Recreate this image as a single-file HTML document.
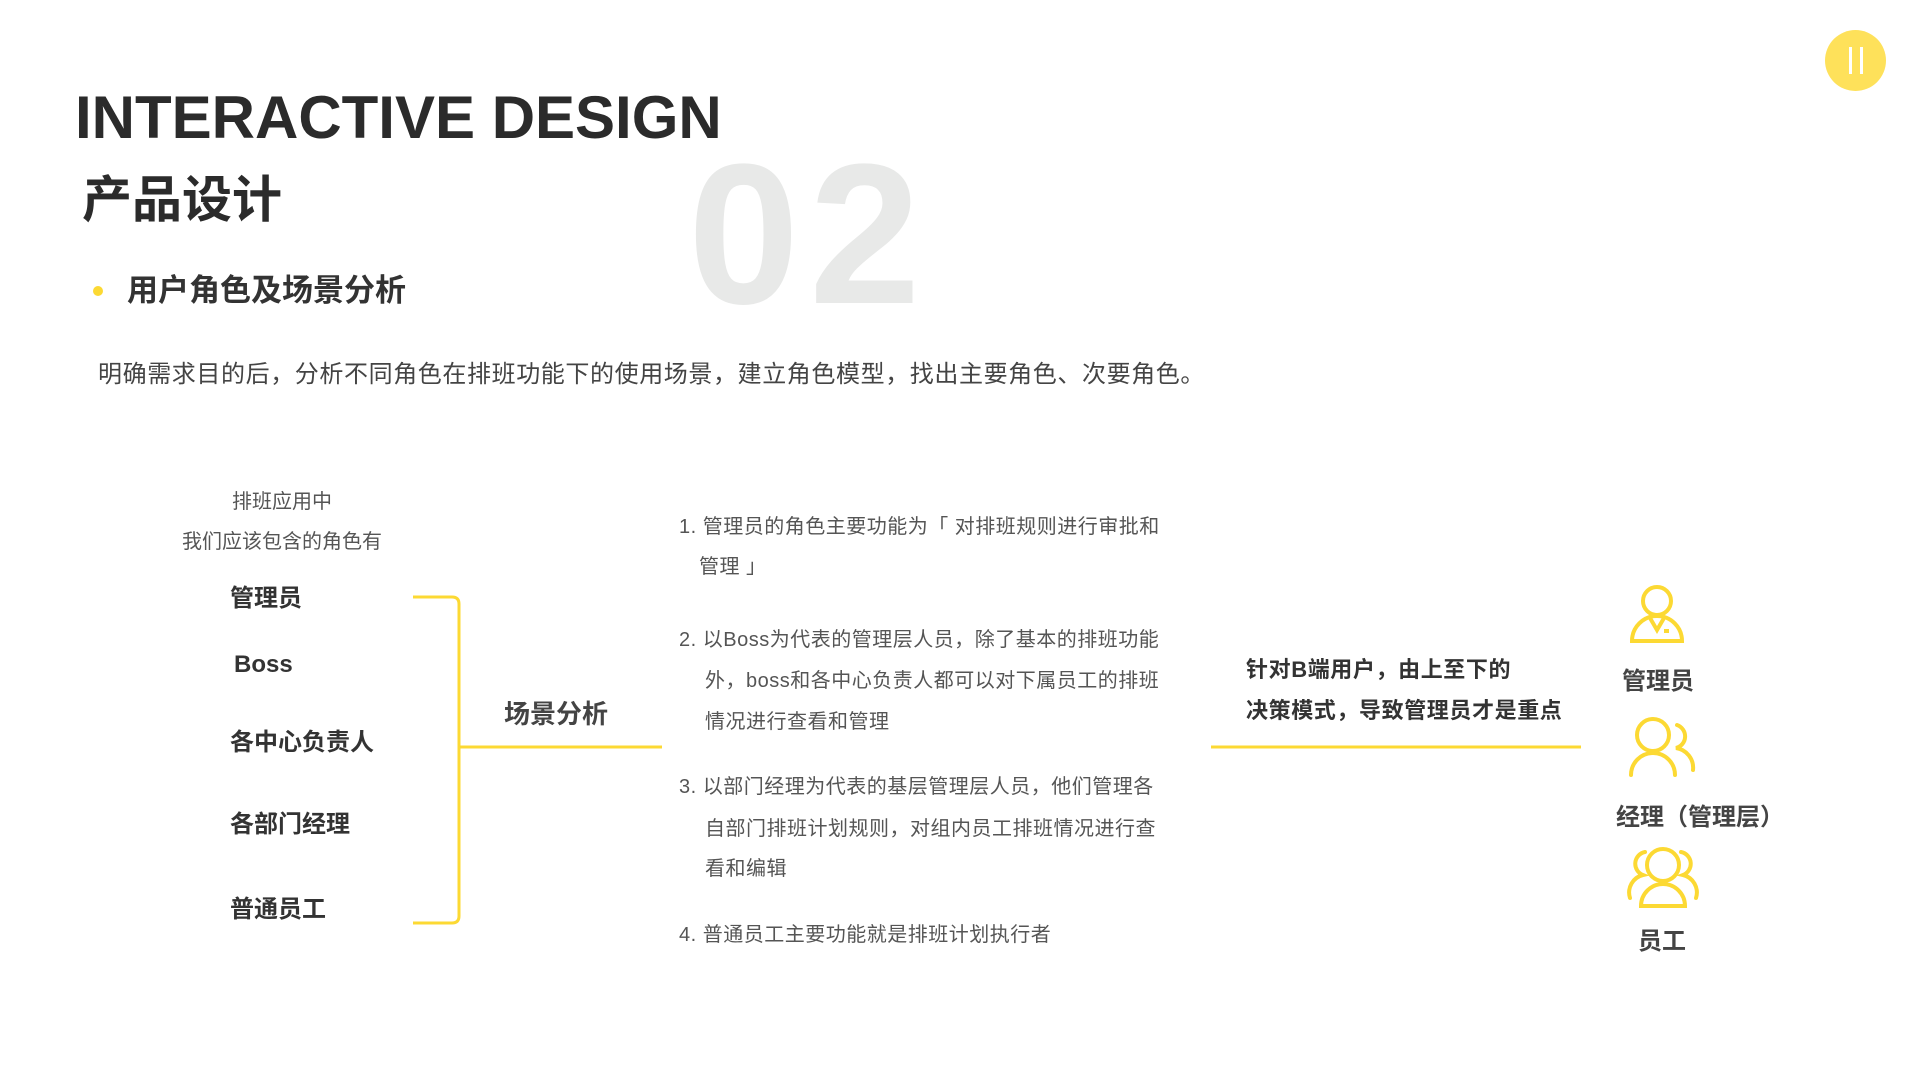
<!DOCTYPE html>
<html><head><meta charset="utf-8"><style>
*{margin:0;padding:0}
body{width:1920px;height:1080px;background:#fff;position:relative;overflow:hidden;font-family:"Liberation Sans","Noto Sans CJK SC",sans-serif;color:#333}
.a{position:absolute;white-space:nowrap}
.b{font-weight:bold}
.li{font-size:20px;color:#555;line-height:24px;letter-spacing:0.5px}
.r{font-size:24px;font-weight:bold;color:#333;line-height:28px}
</style></head><body>
<div class="a" style="left:1825px;top:30px;width:61px;height:61px;border-radius:50%;background:#fee15a"></div>
<div class="a" style="left:1849px;top:47px;width:3px;height:27px;background:#fff"></div>
<div class="a" style="left:1860px;top:47px;width:3px;height:27px;background:#fff"></div>

<div class="a" style="left:688px;top:135px;font-size:200px;font-weight:bold;color:#e8e9e8;line-height:200px;letter-spacing:10px">02</div>
<div class="a" style="left:75px;top:87px;font-size:60px;font-weight:bold;color:#2b2b2b;line-height:62px">INTERACTIVE DESIGN</div>
<div class="a b" style="left:82px;top:170px;font-size:50px;color:#2b2b2b;line-height:60px">产品设计</div>
<div class="a" style="left:93px;top:286px;width:10px;height:10px;border-radius:50%;background:#fcd933"></div>
<div class="a b" style="left:127px;top:273px;font-size:31px;line-height:36px;color:#333">用户角色及场景分析</div>
<div class="a" style="left:98px;top:360px;font-size:24px;line-height:30px;color:#444;letter-spacing:0.6px">明确需求目的后，分析不同角色在排班功能下的使用场景，建立角色模型，找出主要角色、次要角色。</div>

<div class="a" style="left:180px;top:490px;width:204px;text-align:center;font-size:20px;color:#555;line-height:24px">排班应用中</div>
<div class="a" style="left:170px;top:530px;width:224px;text-align:center;font-size:20px;color:#555;line-height:24px">我们应该包含的角色有</div>
<div class="a r" style="left:230px;top:585px">管理员</div>
<div class="a r" style="left:234px;top:651px">Boss</div>
<div class="a r" style="left:230px;top:729px">各中心负责人</div>
<div class="a r" style="left:230px;top:811px">各部门经理</div>
<div class="a r" style="left:230px;top:896px">普通员工</div>

<svg class="a" style="left:0;top:0" width="1920" height="1080">
<path d="M413 597 H452 Q459 597 459 604 V916 Q459 923 452 923 H413" fill="none" stroke="#fcd933" stroke-width="3"/>
<line x1="459" y1="747" x2="662" y2="747" stroke="#fcd933" stroke-width="3"/>
<line x1="1211" y1="747" x2="1581" y2="747" stroke="#fcd933" stroke-width="3"/>
<g fill="none" stroke="#fcd933" stroke-width="4" stroke-linecap="round">
<circle cx="1657" cy="601" r="14"/>
<path d="M1632 641 A25 25 0 0 1 1682 641 Z"/>
<path d="M1650 618 L1657 630 L1664 618"/>
<circle cx="1653" cy="735" r="16"/>
<path d="M1631 775 A22 22 0 0 1 1675 775"/>
<path d="M1677 725 A12 12 0 0 1 1676 748 A20 20 0 0 1 1693 770"/>
<circle cx="1663" cy="865" r="16"/>
<path d="M1641 906 A22 22 0 0 1 1685 906 Z"/>
<path d="M1645 852 A12 12 0 0 0 1643 875 A18 18 0 0 0 1630 898"/>
<path d="M1681 852 A12 12 0 0 1 1683 875 A18 18 0 0 1 1696 898"/>
</g>
<rect x="1664" y="629" width="5" height="4" fill="#fcd933"/>
</svg>

<div class="a b" style="left:504px;top:699px;font-size:26px;line-height:30px;color:#444">场景分析</div>

<div class="a li" style="left:679px;top:515px">1. 管理员的角色主要功能为「 对排班规则进行审批和</div>
<div class="a li" style="left:699px;top:555px">管理 」</div>
<div class="a li" style="left:679px;top:628px">2. 以Boss为代表的管理层人员，除了基本的排班功能</div>
<div class="a li" style="left:705px;top:669px">外，boss和各中心负责人都可以对下属员工的排班</div>
<div class="a li" style="left:705px;top:710px">情况进行查看和管理</div>
<div class="a li" style="left:679px;top:775px">3. 以部门经理为代表的基层管理层人员，他们管理各</div>
<div class="a li" style="left:705px;top:817px">自部门排班计划规则，对组内员工排班情况进行查</div>
<div class="a li" style="left:705px;top:857px">看和编辑</div>
<div class="a li" style="left:679px;top:923px">4. 普通员工主要功能就是排班计划执行者</div>

<div class="a b" style="left:1246px;top:657px;font-size:22px;line-height:26px;color:#333;letter-spacing:0.6px">针对B端用户，由上至下的</div>
<div class="a b" style="left:1246px;top:698px;font-size:22px;line-height:26px;color:#333;letter-spacing:0.6px">决策模式，导致管理员才是重点</div>

<div class="a b" style="left:1622px;top:667px;font-size:24px;line-height:30px;color:#444">管理员</div>
<div class="a b" style="left:1616px;top:803px;font-size:24px;line-height:30px;color:#444">经理（管理层）</div>
<div class="a b" style="left:1638px;top:927px;font-size:24px;line-height:30px;color:#444">员工</div>
</body></html>
